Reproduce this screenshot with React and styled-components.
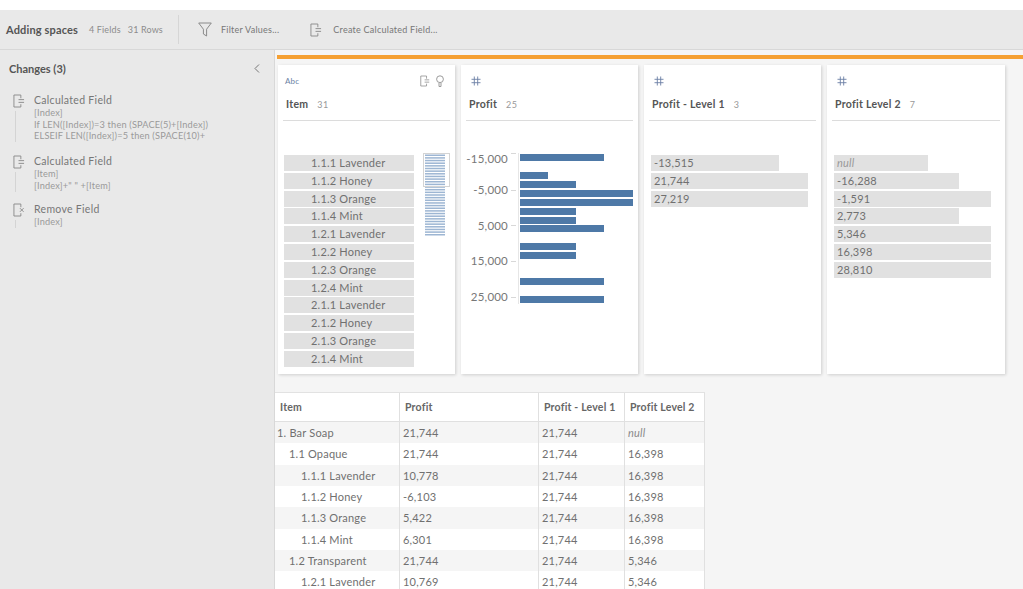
import React from "react";
import styled, { createGlobalStyle } from "styled-components";

const GlobalStyle = createGlobalStyle`
	html, body {
		margin: 0;
		padding: 0;
		background: #fff;
		font-family: Lato, "Open Sans", sans-serif;
	}
`;

const Page = styled.div`
	width: 1023px;
	height: 589px;
	overflow: hidden;
	padding-top: 10px;
	box-sizing: border-box;
	display: flex;
	flex-direction: column;
`;

const Toolbar = styled.div`
	height: 40px;
	flex: none;
	box-sizing: border-box;
	background: #e9e9e9;
	border-bottom: 1px solid #d8d8d8;
	display: flex;
	align-items: center;
	padding-left: 6px;
`;

const FlowName = styled.strong`
	font-size: 11px;
	font-weight: 700;
	letter-spacing: 0.15px;
	color: #555;
	margin-right: 11px;
`;

const FlowStat = styled.span`
	font-size: 9px;
	color: #8c8c8c;
	letter-spacing: 0.15px;
	margin-right: 7px;
`;

const ToolDivider = styled.div`
	width: 1px;
	height: 29px;
	background: #d6d6d6;
	margin: 0 19px 0 8px;
`;

const ToolButton = styled.div`
	display: flex;
	align-items: center;
	gap: ${(p) => p.$gap}px;
	font-size: 9px;
	letter-spacing: 0.25px;
	color: #777;
	margin-right: 31px;
`;

const Body = styled.div`
	flex: 1;
	display: flex;
	min-height: 0;
`;

const Sidebar = styled.aside`
	width: 275px;
	flex: none;
	box-sizing: border-box;
	background: #e9e9e9;
	border-right: 1px solid #d8d8d8;
	padding: 12px 14px 0 9px;
`;

const SideHead = styled.div`
	display: flex;
	justify-content: space-between;
	align-items: center;
	font-size: 11px;
	font-weight: 700;
	color: #555;
	margin-bottom: 19px;
`;

const ChangeRow = styled.div`
	display: flex;
	gap: 10px;
	padding-left: 4px;
	margin-bottom: ${(p) => p.$gap}px;
`;

const ChangeIcon = styled.div`
	width: 11px;
	flex: none;
	display: flex;
	flex-direction: column;
	align-items: center;

	&::after {
		content: "";
		width: 1px;
		flex: 1;
		margin: 3px 0 0 -6px;
		background: #d4d4d4;
	}
`;

const ChangeTitle = styled.div`
	font-size: 10.5px;
	line-height: 13px;
	letter-spacing: 0.3px;
	color: #777;
`;

const ChangeLine = styled.div`
	font-size: 9.2px;
	line-height: 11.7px;
	letter-spacing: 0.18px;
	color: #9a9a9a;
	white-space: nowrap;
`;

const Main = styled.main`
	flex: 1;
	min-width: 0;
	background: #f5f5f5;
	display: flex;
	flex-direction: column;
	padding-top: 5px;
`;

const OrangeBar = styled.div`
	height: 4px;
	flex: none;
	margin-left: 2px;
	background: #f5a033;
`;

const CardRow = styled.div`
	display: flex;
	gap: 6px;
	height: 309px;
	flex: none;
	margin: 6px 0 18px 3px;
`;

const Card = styled.section`
	width: ${(p) => p.$width}px;
	flex: none;
	box-sizing: border-box;
	background: #fff;
	box-shadow: 1px 1px 3px rgba(0, 0, 0, 0.16);
	display: flex;
	flex-direction: column;
`;

const CardHead = styled.header`
	height: 56px;
	margin: 0 5px;
	padding: 0 3px;
	box-sizing: border-box;
	border-bottom: 1px solid #dcdcdc;
	flex: none;
`;

const TypeRow = styled.div`
	height: 32px;
	margin-bottom: 1px;
	display: flex;
	align-items: center;
	justify-content: space-between;
	padding: 0 3px 0 2px;
`;

const TypeLabel = styled.span`
	font-size: 8px;
	color: #6b7fa5;
	letter-spacing: 0.2px;
	margin-left: -3px;
`;

const IconGroup = styled.div`
	display: flex;
	gap: 6px;
	align-items: center;
`;

const FieldTitle = styled.div`
	display: flex;
	align-items: baseline;
	gap: 9px;
	font-size: 10.5px;
	font-weight: 700;
	color: #555;
	letter-spacing: 0.28px;
`;

const FieldCount = styled.span`
	font-size: 9px;
	font-weight: 400;
	color: #999;
	letter-spacing: 0.3px;
`;

const CardBody = styled.div`
	flex: 1;
	position: relative;
	padding: 34px 6px 0;
	box-sizing: border-box;
`;

const ValueList = styled.div`
	display: flex;
	flex-direction: column;
	gap: 1.8px;
	margin-left: ${(p) => p.$shift || 0}px;
`;

const ValueBar = styled.div`
	height: 16px;
	width: ${(p) => p.$width}px;
	box-sizing: border-box;
	background: #e1e1e1;
	font-size: 11px;
	line-height: 16px;
	letter-spacing: 0.2px;
	color: ${(p) => (p.$null ? "#999" : "#707070")};
	font-style: ${(p) => (p.$null ? "italic" : "normal")};
	padding-left: ${(p) => p.$indent || 3}px;
	white-space: nowrap;
`;

const ProfileStrip = styled.svg`
	position: absolute;
	left: 145px;
	top: 32px;
`;

const ChartSvg = styled.svg`
	display: block;
	margin: -2px 0 0 -6px;
`;

const Table = styled.div`
	width: 430px;
	background: #fff;
	border-top: 1px solid #e2e2e2;
	flex: none;
	display: grid;
	grid-template-columns: 125px 139px 86px 80px;
`;

const HeadCell = styled.div`
	height: 28px;
	box-sizing: content-box;
	border-right: 1px solid #e0e0e0;
	border-bottom: 1px solid #e0e0e0;
	padding-left: 5px;
	display: flex;
	align-items: center;
	font-size: 10.5px;
	font-weight: 700;
	letter-spacing: 0.2px;
	color: #666;
	white-space: nowrap;
`;

const Cell = styled.div`
	height: 21.33px;
	line-height: 21px;
	box-sizing: border-box;
	border-right: 1px solid #e0e0e0;
	padding-left: ${(p) => p.$indent || 3}px;
	font-size: 11px;
	letter-spacing: 0.2px;
	white-space: nowrap;
	color: ${(p) => (p.$null ? "#8a8a8a" : "#707070")};
	font-style: ${(p) => (p.$null ? "italic" : "normal")};
	background: ${(p) => (p.$shaded ? "#f5f5f5" : "#fff")};
`;

function CalcIcon({ size = 12, remove }) {
	return (
		<svg width={size} height={Math.round(size * 1.15)} viewBox="0 0 13 15" fill="none" stroke="#8a8a8a" strokeWidth="1">
			<path d="M8.5 4.5V1H1v13h7.5v-3" />
			{remove ? (
				<path d="M7.5 5.5l4 4m0-4l-4 4" />
			) : (
				<path d="M6 6h6M6 9h6" />
			)}
		</svg>
	);
}

function FunnelIcon() {
	return (
		<svg width="14" height="15" viewBox="0 0 14 15" fill="none" stroke="#8a8a8a" strokeWidth="1">
			<path d="M.7 1h12.6L8.6 7.2V14L5.4 12V7.2z" />
		</svg>
	);
}

function BulbIcon() {
	return (
		<svg width="8" height="13" viewBox="0 0 8 13" fill="none" stroke="#9a9a9a" strokeWidth="1">
			<circle cx="4" cy="4.2" r="3.4" />
			<path d="M3 8v3.5h2V8" />
		</svg>
	);
}

function HashIcon() {
	return (
		<svg width="10" height="10" viewBox="0 0 10 10" fill="none" stroke="#6b7fa5" strokeWidth="0.9">
			<path d="M3.3.5v9M6.7.5v9M.5 3.3h9M.5 6.7h9" />
		</svg>
	);
}

const items = [
	"1.1.1 Lavender", "1.1.2 Honey", "1.1.3 Orange", "1.1.4 Mint",
	"1.2.1 Lavender", "1.2.2 Honey", "1.2.3 Orange", "1.2.4 Mint",
	"2.1.1 Lavender", "2.1.2 Honey", "2.1.3 Orange", "2.1.4 Mint",
];

const level1 = [
	{ text: "-13,515", width: 128 },
	{ text: "21,744", width: 157 },
	{ text: "27,219", width: 157 },
];

const level2 = [
	{ text: "null", width: 94, isNull: true },
	{ text: "-16,288", width: 125 },
	{ text: "-1,591", width: 157 },
	{ text: "2,773", width: 125 },
	{ text: "5,346", width: 157 },
	{ text: "16,398", width: 157 },
	{ text: "28,810", width: 157 },
];

// page y and width of every bar
const profitBars = [
	[154, 84], [172, 28], [181, 56], [190, 113], [199, 113], [208, 56],
	[217, 56], [225, 84], [243, 56], [252, 56], [278, 84], [296, 84],
];

const profitTicks = [
	["-15,000", 153, 159], ["-5,000", 190, 190], ["5,000", 225, 226], ["15,000", 261, 261], ["25,000", 297, 297],
];

const rows = [
	["1. Bar Soap", 2, "21,744", "null"],
	["1.1 Opaque", 14, "21,744", "16,398"],
	["1.1.1 Lavender", 26, "10,778", "16,398"],
	["1.1.2 Honey", 26, "-6,103", "16,398"],
	["1.1.3 Orange", 26, "5,422", "16,398"],
	["1.1.4 Mint", 26, "6,301", "16,398"],
	["1.2 Transparent", 14, "21,744", "5,346"],
	["1.2.1 Lavender", 26, "10,769", "5,346"],
];

function ProfitChart() {
	return (
		<ChartSvg width="177" height="200" viewBox="0 153 177 200">
			<path d="M57.5 153V304" stroke="#e6e6e6" />
			{profitTicks.map(([label, tick, y]) => (
				<g key={label}>
					<path d={`M50 ${tick + 0.5}h5`} stroke="#d8d8d8" />
					<text x="47" y={y + 4} textAnchor="end" fontSize="11.5" fill="#777" fontFamily="Lato, sans-serif" letterSpacing="0.2">
						{label}
					</text>
				</g>
			))}
			{profitBars.map(([y, w]) => (
				<rect key={y} x="59" y={y} width={w} height="7" fill="#4e79a7" />
			))}
		</ChartSvg>
	);
}

function ProfileLines() {
	const lines = [];
	for (let y = 1.5; y < 83; y += 2.65) {
		lines.push(<rect key={y} x="2" y={y} width="20" height="1.5" fill="#9db6d3" />);
	}
	return (
		<ProfileStrip width="27" height="85" viewBox="0 0 27 85">
			{lines}
			<rect x="0.5" y="0.5" width="26" height="33" fill="none" stroke="#d4d4d4" />
		</ProfileStrip>
	);
}

function FieldCard({ width, type, title, count, tools, children }) {
	return (
		<Card $width={width}>
			<CardHead>
				<TypeRow>
					{type === "abc" ? <TypeLabel>Abc</TypeLabel> : <HashIcon />}
					{tools}
				</TypeRow>
				<FieldTitle>
					{title}
					<FieldCount>{count}</FieldCount>
				</FieldTitle>
			</CardHead>
			<CardBody>{children}</CardBody>
		</Card>
	);
}

export default function App() {
	return (
		<Page>
			<GlobalStyle />
			<Toolbar>
				<FlowName>Adding spaces</FlowName>
				<FlowStat>4 Fields</FlowStat>
				<FlowStat>31 Rows</FlowStat>
				<ToolDivider />
				<ToolButton $gap={9}>
					<FunnelIcon />
					Filter Values...
				</ToolButton>
				<ToolButton $gap={11}>
					<CalcIcon />
					Create Calculated Field...
				</ToolButton>
			</Toolbar>
			<Body>
				<Sidebar>
					<SideHead>
						Changes (3)
						<svg width="6" height="9" viewBox="0 0 6 9" fill="none" stroke="#777" strokeWidth="1">
							<path d="M5 .5l-4 4 4 4" />
						</svg>
					</SideHead>
					<ChangeRow $gap={13}>
						<ChangeIcon><CalcIcon /></ChangeIcon>
						<div>
							<ChangeTitle>Calculated Field</ChangeTitle>
							<ChangeLine>[Index]</ChangeLine>
							<ChangeLine>If LEN([Index])=3 then (SPACE(5)+[Index])</ChangeLine>
							<ChangeLine>ELSEIF LEN([Index])=5 then (SPACE(10)+</ChangeLine>
						</div>
					</ChangeRow>
					<ChangeRow $gap={11.5}>
						<ChangeIcon><CalcIcon /></ChangeIcon>
						<div>
							<ChangeTitle>Calculated Field</ChangeTitle>
							<ChangeLine>[Item]</ChangeLine>
							<ChangeLine>[Index]+" " +[Item]</ChangeLine>
						</div>
					</ChangeRow>
					<ChangeRow $gap={0}>
						<ChangeIcon><CalcIcon remove /></ChangeIcon>
						<div>
							<ChangeTitle>Remove Field</ChangeTitle>
							<ChangeLine>[Index]</ChangeLine>
						</div>
					</ChangeRow>
				</Sidebar>
				<Main>
					<OrangeBar />
					<CardRow>
						<FieldCard
							width={177}
							type="abc"
							title="Item"
							count="31"
							tools={
								<IconGroup>
									<CalcIcon size={10} />
									<BulbIcon />
								</IconGroup>
							}
						>
							<ValueList>
								{items.map((item) => (
									<ValueBar key={item} $width={130} $indent={27}>{item}</ValueBar>
								))}
							</ValueList>
							<ProfileLines />
						</FieldCard>
						<FieldCard width={177} title="Profit" count="25">
							<ProfitChart />
						</FieldCard>
						<FieldCard width={177} title="Profit - Level 1" count="3">
							<ValueList $shift={1}>
								{level1.map((v) => (
									<ValueBar key={v.text} $width={v.width}>{v.text}</ValueBar>
								))}
							</ValueList>
						</FieldCard>
						<FieldCard width={178} title="Profit Level 2" count="7">
							<ValueList $shift={1}>
								{level2.map((v) => (
									<ValueBar key={v.text} $width={v.width} $null={v.isNull}>{v.text}</ValueBar>
								))}
							</ValueList>
						</FieldCard>
					</CardRow>
					<Table>
						<HeadCell>Item</HeadCell>
						<HeadCell>Profit</HeadCell>
						<HeadCell>Profit - Level 1</HeadCell>
						<HeadCell>Profit Level 2</HeadCell>
						{rows.map(([name, indent, profit, lvl2], i) => (
							<React.Fragment key={name}>
								<Cell $shaded={i % 2 === 0} $indent={indent}>{name}</Cell>
								<Cell $shaded={i % 2 === 0}>{profit}</Cell>
								<Cell $shaded={i % 2 === 0}>21,744</Cell>
								<Cell $shaded={i % 2 === 0} $null={lvl2 === "null"}>{lvl2}</Cell>
							</React.Fragment>
						))}
					</Table>
				</Main>
			</Body>
		</Page>
	);
}
